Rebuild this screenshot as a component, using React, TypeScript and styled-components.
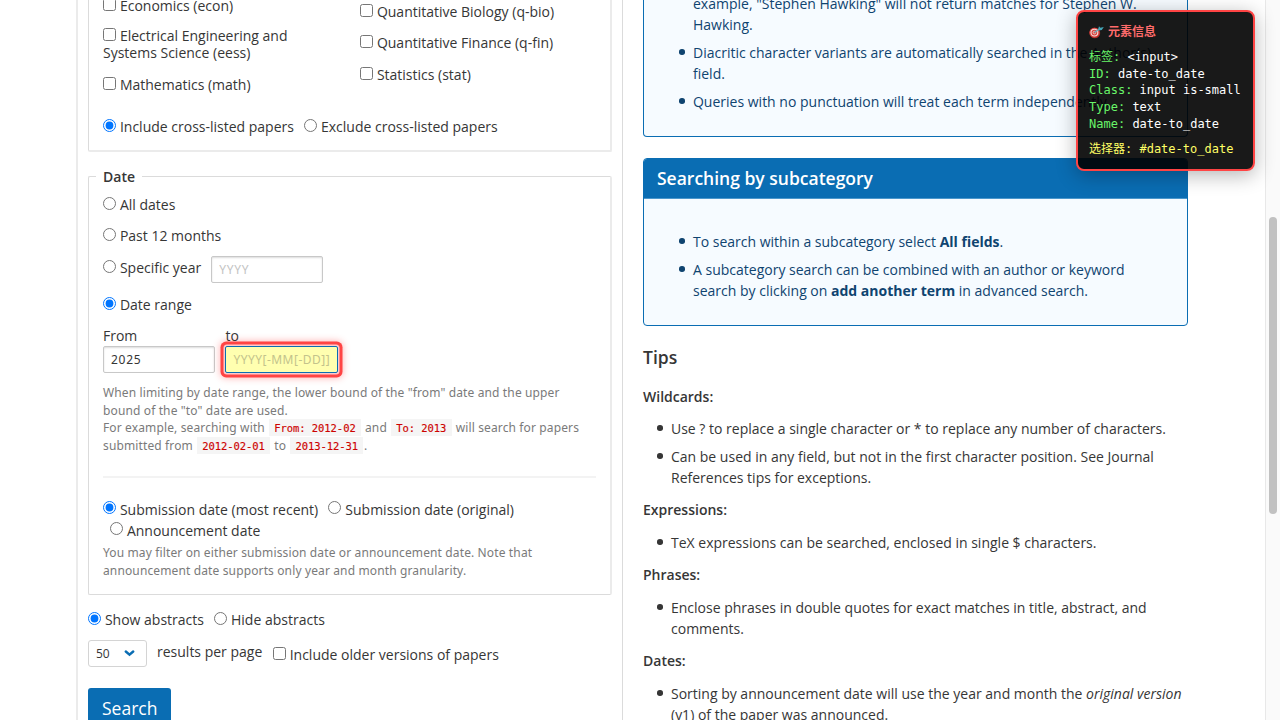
import React from 'react';
import styled, { createGlobalStyle, css } from 'styled-components';

const GlobalStyle = createGlobalStyle`
  *, *::before, *::after { box-sizing: border-box; }
  html, body { margin: 0; padding: 0; overflow: hidden; background: #fff; }
  body { font: 14px/21px 'Open Sans', sans-serif; color: #363636; }
  h2, h3, p, ul { margin: 0; padding: 0; }
`;

const Page = styled.div`
  display: flex;
  width: 1280px;
  height: 720px;
  padding-left: 76px;
  overflow: hidden;
`;

const FormColumn = styled.form`
  flex: 0 0 547px;
  height: 720px;
  padding: 0 10px;
  border-left: 2px solid #ebebeb;
  border-right: 1px solid #dbdbdb;
  white-space: nowrap;
`;

const HelpColumn = styled.aside`
  flex: 0 0 545px;
  margin-left: 20px;
  height: 720px;
  white-space: nowrap;
`;

const Group = styled.section<{ $height: number; $open?: boolean }>`
  width: 524px;
  height: ${p => p.$height}px;
  margin-top: ${p => (p.$open ? 0 : 24)}px;
  padding: 0 14px;
  border: 1px solid #dbdbdb;
  border-right: 2px solid #ebebeb;
  border-radius: ${p => (p.$open ? '0 0 2px 2px' : '2px')};
  ${p => p.$open && css`
    border-top: 0;
    border-bottom: 2px solid #ebebeb;
  `}
`;

const Legend = styled.h3`
  width: max-content;
  margin: -11px 0 0 -7px;
  padding: 0 7px;
  background: #fff;
  font-size: 14px;
  font-weight: 600;
  line-height: 21px;
`;

const Columns = styled.div`
  display: grid;
  grid-template-columns: 257px 1fr;
  height: 116px;
`;

const Stack = styled.div`
  display: flex;
  flex-direction: column;
  align-items: flex-start;
`;

const Option = styled.label<{ $top?: number; $left?: number; $tight?: boolean }>`
  display: block;
  margin-top: ${p => p.$top ?? 0}px;
  margin-left: ${p => p.$left ?? 0}px;
  line-height: ${p => (p.$tight ? '17px' : '21px')};

  input {
    width: 13px;
    height: 13px;
    margin: 0 3.9px 0 0;
    vertical-align: 0.5px;
  }
`;

const Row = styled.div<{ $top?: number }>`
  display: flex;
  align-items: flex-start;
  margin-top: ${p => p.$top ?? 0}px;
`;

const Field = styled.input<{ $active?: boolean }>`
  display: block;
  width: 112px;
  height: 27px;
  padding: 0 7px;
  border: 1px solid #c8c8c8;
  border-radius: 2px;
  outline: 0;
  box-shadow: inset 0 1px 2px rgba(10, 10, 10, 0.14);
  background: #fff;
  color: #363636;
  font: 12px 'Noto Sans', sans-serif;
  letter-spacing: 0.7px;
  &::placeholder { color: #c3c3c3; opacity: 1; }
  ${p => p.$active && css`
    width: 113px;
    border-color: #0a6db3;
    background: #ffffb0;
    box-shadow: 0 0 0 1.5px #ffc9c9, 0 0 0 4.5px #ff4444, 0 0 7px 5px rgba(255, 68, 68, 0.4);
    letter-spacing: 0.48px;
    &::placeholder { color: #c3c38c; }
  `}
`;

const YearSlot = styled.div`
  margin-left: 10px;
`;

const DateLabel = styled.label<{ $width: number }>`
  width: ${p => p.$width}px;
`;

const Hint = styled.p<{ $top: number }>`
  margin-top: ${p => p.$top}px;
  color: #7a7a7a;
  font: 12px/17.7px 'Noto Sans', sans-serif;
  letter-spacing: 0.13px;
`;

const Code = styled.code`
  margin: 0 0.9px;
  padding: 3px 5.2px 2px;
  background: #f5f5f5;
  color: #cd0200;
  font: 10.5px 'DejaVu Sans Mono', monospace;
  letter-spacing: -0.06px;
  -webkit-text-stroke: 0.15px #cd0200;
`;

const Divider = styled.div`
  width: 493px;
  height: 2px;
  margin-top: 21px;
  background: #f3f3f3;
`;

const PageSize = styled.div`
  display: flex;
  align-items: center;
  justify-content: space-between;
  width: 58.5px;
  height: 27px;
  margin-right: 10.5px;
  padding: 0 10.5px 0 7px;
  border: 1px solid #d4d4d4;
  border-radius: 3px;
  font-size: 12px;
`;

const SearchButton = styled.button`
  display: block;
  width: 83.4px;
  height: 40px;
  margin-top: 21px;
  padding: 0;
  border: 0;
  border-radius: 3px;
  background: #0a6db3;
  color: #fff;
  font: 17.5px 'Open Sans', sans-serif;
`;

const Card = styled.section<{ $height: number; $open?: boolean }>`
  height: ${p => p.$height}px;
  border: 1px solid #0a6db3;
  border-radius: ${p => (p.$open ? '0 0 4px 4px' : '4px')};
  ${p => p.$open && css`border-top: 0;`}
  background: #f6fbff;
  color: #0f4470;
  overflow: hidden;

  & + & { margin-top: 21px; }
`;

const CardTitle = styled.h2`
  height: 40px;
  padding-left: 13px;
  border-bottom: 1px solid #4a97cc;
  background: #0a6db3;
  color: #fff;
  font-size: 17.5px;
  font-weight: 600;
  line-height: 39px;
`;

const Bullets = styled.ul<{ $top: number; $left: number; $continued?: boolean }>`
  margin-top: ${p => p.$top}px;
  padding-left: ${p => p.$left}px;
  list-style: none;
  li + li { margin-top: 7px; }
  li::before {
    content: '';
    display: inline-block;
    width: 5.6px;
    height: 5.6px;
    margin: 0 8.4px 0 -14px;
    border-radius: 50%;
    background: currentColor;
    vertical-align: 3px;
  }
  ${p => p.$continued && css`
    li:first-child::before { display: none; }
  `}
`;

const Heading = styled.h2`
  margin-top: 19px;
  font-size: 17.5px;
  font-weight: 600;
  line-height: 24px;
`;

const Subheading = styled.h3<{ $top: number }>`
  margin-top: ${p => p.$top}px;
  font-size: 14px;
  font-weight: 600;
  line-height: 21px;
`;

const Scrollbar = styled.div`
  width: 15px;
  height: 720px;
  margin-left: auto;
  padding: 217px 2px 0 3px;
  border-left: 1px solid #e8e8e8;
  background: #fafafa;
`;

const Thumb = styled.div`
  width: 8px;
  height: 297px;
  border-radius: 4px;
  background: #c1c1c1;
`;

const Inspector = styled.div`
  position: absolute;
  top: 10px;
  left: 1076px;
  width: 179px;
  height: 161px;
  padding: 12px 11px 0;
  border: 2px solid #ff4444;
  border-radius: 8px;
  background: rgba(0, 0, 0, 0.9);
  box-shadow: 0 4px 20px rgba(0, 0, 0, 0.3);
  color: #fff;
  font: 12px/16.8px 'DejaVu Sans Mono', 'Noto Sans CJK SC', monospace;
  white-space: nowrap;
`;

const InspectorTitle = styled.div`
  display: flex;
  align-items: center;
  gap: 4px;
  margin-bottom: 8px;
  color: #ff6b6b;
  font-weight: 700;
`;

const Key = styled.span`
  color: #69f569;
`;

const Selector = styled.div`
  margin-top: 8px;
  color: #ffff66;
`;

function Choice({ type = 'radio', name, checked, children, ...rest }: {
  type?: 'radio' | 'checkbox'; name?: string; checked?: boolean; children: React.ReactNode;
  $top?: number; $left?: number; $tight?: boolean;
}) {
  return (
    <Option {...rest}>
      <input type={type} name={name} defaultChecked={checked} />
      {children}
    </Option>
  );
}

function TargetIcon() {
  return (
    <svg width="15" height="14" viewBox="0 0 15 14" fill="none">
      <ellipse cx="5.8" cy="8" rx="5.4" ry="5.2" fill="#a92b28" />
      <ellipse cx="5.4" cy="7.6" rx="5" ry="4.9" fill="#d9423d" />
      <circle cx="5.4" cy="7.6" r="3.4" stroke="#f3dcd8" strokeWidth="1.1" />
      <circle cx="5.4" cy="7.6" r="1.3" stroke="#f3dcd8" strokeWidth="0.8" />
      <path d="M5.6 7.4 10.5 4" stroke="#6fa9b5" strokeWidth="1.5" />
      <path d="m9.2 4 .8-2.8 1.4 1.5L14.8 2 12.8 5l-3.1.6Z" fill="#43a6b8" />
    </svg>
  );
}

const details = [
  ['标签', '<input>'],
  ['ID', 'date-to_date'],
  ['Class', 'input is-small'],
  ['Type', 'text'],
  ['Name', 'date-to_date'],
];

export default function App() {
  return (
    <>
      <GlobalStyle />
      <Page>
        <FormColumn>
          <Group $height={152} $open>
            <Columns>
              <Stack>
                <Choice type="checkbox" $top={-5}>Economics (econ)</Choice>
                <Choice type="checkbox" $top={11} $tight>Electrical Engineering and<br />Systems Science (eess)</Choice>
                <Choice type="checkbox" $top={13}>Mathematics (math)</Choice>
              </Stack>
              <Stack>
                <Choice type="checkbox" $top={1}>Quantitative Biology (q-bio)</Choice>
                <Choice type="checkbox" $top={10}>Quantitative Finance (q-fin)</Choice>
                <Choice type="checkbox" $top={11}>Statistics (stat)</Choice>
              </Stack>
            </Columns>
            <Row>
              <Choice name="cross" checked>Include cross-listed papers</Choice>
              <Choice name="cross" $left={10.2}>Exclude cross-listed papers</Choice>
            </Row>
          </Group>

          <Group $height={419}>
            <Legend>Date</Legend>
            <Choice name="date" $top={7}>All dates</Choice>
            <Choice name="date" $top={10}>Past 12 months</Choice>
            <Row $top={10}>
              <Choice name="date" $top={1}>Specific year</Choice>
              <YearSlot><Field placeholder="YYYY" /></YearSlot>
            </Row>
            <Choice name="date" $top={11} checked>Date range</Choice>
            <Row $top={10}>
              <DateLabel $width={122.4}>From<Field defaultValue="2025" /></DateLabel>
              <DateLabel $width={113}>to<Field $active placeholder="YYYY[-MM[-DD]]" /></DateLabel>
            </Row>
            <Hint $top={11}>
              When limiting by date range, the lower bound of the "from" date and the upper<br />
              bound of the "to" date are used.<br />
              For example, searching with <Code>From: 2012-02</Code> and <Code>To: 2013</Code> will search for papers<br />
              submitted from <Code>2012-02-01</Code> to <Code>2013-12-31</Code>.
            </Hint>
            <Divider />
            <Row $top={21}>
              <Choice name="kind" checked>Submission date (most recent)</Choice>
              <Choice name="kind" $left={10.2}>Submission date (original)</Choice>
            </Row>
            <Choice name="kind" $left={7}>Announcement date</Choice>
            <Hint $top={3.5}>
              You may filter on either submission date or announcement date. Note that<br />
              announcement date supports only year and month granularity.
            </Hint>
          </Group>

          <Row $top={14}>
            <Choice name="abs" checked>Show abstracts</Choice>
            <Choice name="abs" $left={10.2}>Hide abstracts</Choice>
          </Row>
          <Row $top={10}>
            <PageSize>
              50
              <svg width="11" height="7" viewBox="0 0 11 7" fill="none" stroke="#0a6db3" strokeWidth="2.4" strokeLinecap="round">
                <path d="M1.8 1.5 5.5 4.7 9.2 1.5" />
              </svg>
            </PageSize>
            <Option $top={1}>results per page</Option>
            <Choice type="checkbox" $top={4} $left={10.5}>Include older versions of papers</Choice>
          </Row>
          <SearchButton type="button">Search</SearchButton>
        </FormColumn>

        <HelpColumn>
          <Card $height={137} $open>
            <Bullets $top={-7} $left={49} $continued>
              <li>example, "Stephen Hawking" will not return matches for Stephen W.<br />Hawking.</li>
              <li>Diacritic character variants are automatically searched in the Author(s)<br />field.</li>
              <li>Queries with no punctuation will treat each term independently.</li>
            </Bullets>
          </Card>
          <Card $height={168}>
            <CardTitle>Searching by subcategory</CardTitle>
            <Bullets $top={32} $left={49}>
              <li>To search within a subcategory select <b>All fields</b>.</li>
              <li>A subcategory search can be combined with an author or keyword<br />search by clicking on <b>add another term</b> in advanced search.</li>
            </Bullets>
          </Card>
          <Heading>Tips</Heading>
          <Subheading $top={17}>Wildcards:</Subheading>
          <Bullets $top={11} $left={28}>
            <li>Use ? to replace a single character or * to replace any number of characters.</li>
            <li>Can be used in any field, but not in the first character position. See Journal<br />References tips for exceptions.</li>
          </Bullets>
          <Subheading $top={11}>Expressions:</Subheading>
          <Bullets $top={12} $left={28}>
            <li>TeX expressions can be searched, enclosed in single $ characters.</li>
          </Bullets>
          <Subheading $top={11}>Phrases:</Subheading>
          <Bullets $top={12} $left={28}>
            <li>Enclose phrases in double quotes for exact matches in title, abstract, and<br />comments.</li>
          </Bullets>
          <Subheading $top={11}>Dates:</Subheading>
          <Bullets $top={12} $left={28}>
            <li>Sorting by announcement date will use the year and month the <i>original version</i><br />(v1) of the paper was announced.</li>
          </Bullets>
        </HelpColumn>

        <Scrollbar><Thumb /></Scrollbar>
      </Page>

      <Inspector>
        <InspectorTitle><TargetIcon />元素信息</InspectorTitle>
        {details.map(([key, value]) => (
          <div key={key}><Key>{key}:</Key> {value}</div>
        ))}
        <Selector>选择器: #date-to_date</Selector>
      </Inspector>
    </>
  );
}
